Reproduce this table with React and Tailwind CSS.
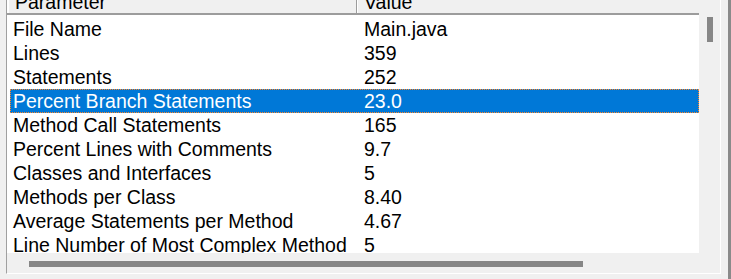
import React from 'react';

const metrics = [
  ['File Name', 'Main.java'],
  ['Lines', '359'],
  ['Statements', '252'],
  ['Percent Branch Statements', '23.0'],
  ['Method Call Statements', '165'],
  ['Percent Lines with Comments', '9.7'],
  ['Classes and Interfaces', '5'],
  ['Methods per Class', '8.40'],
  ['Average Statements per Method', '4.67'],
  ['Line Number of Most Complex Method', '5'],
];

const Row = ({ name, value, selected }) => (
  <div
    className={
      selected
        ? 'ml-[3px] h-[24px] flex shrink-0 bg-[#0078d7] text-white border border-dotted border-[#ff8728] leading-[22px]'
        : 'ml-[3px] h-[24px] flex shrink-0 text-black leading-[24px]'
    }
  >
    <div className={selected ? 'w-[346px] pl-[2px] whitespace-nowrap' : 'w-[347px] pl-[3px] whitespace-nowrap'}>
      {name}
    </div>
    <div className="pl-[7px] whitespace-nowrap">{value}</div>
  </div>
);

export default function App() {
  return (
    <div className="w-[731px] h-[279px] overflow-hidden bg-[#f0f0f0] flex font-['Liberation_Sans',Arial,sans-serif] text-[19.5px]">
      {/* scroll pane */}
      <div className="ml-[6px] mt-[-10px] w-[715px] h-[284px] shrink-0 flex flex-col border-l border-l-[#a0a0a0] border-r border-r-white border-b border-b-white">
        <div className="flex flex-1 min-h-0">
          {/* table */}
          <div className="w-[692px] flex flex-col overflow-hidden">
            <div className="h-[25px] shrink-0 flex bg-[#f0f0f0] border-b-2 border-b-[#9c9c9c] leading-[24px]">
              <div className="w-[350px] pl-[6px] border-l-2 border-l-white border-r border-r-[#9c9c9c]">Parameter</div>
              <div className="flex-1 pl-[6px] border-l border-l-white">Value</div>
            </div>
            <div className="flex-1 bg-white pt-[2px] flex flex-col overflow-hidden">
              {metrics.map(([name, value], i) => (
                <Row key={name} name={name} value={value} selected={i === 3} />
              ))}
            </div>
          </div>
          {/* vertical scrollbar */}
          <div className="w-[21px] flex flex-col">
            <div className="h-[25px] shrink-0" />
            <div className="flex-1 bg-[#f0f0f0] pt-[2px] pl-[8px]">
              <div className="w-[6px] h-[25px] bg-[#868686]" />
            </div>
          </div>
        </div>
        {/* horizontal scrollbar */}
        <div className="h-[20px] shrink-0 flex">
          <div className="w-[692px] pt-[8px] pl-[22px]">
            <div className="w-[554px] h-[6px] bg-[#868686]" />
          </div>
          <div className="flex-1" />
        </div>
      </div>
      <div className="flex-1" />
      <div className="w-[3px] bg-[#8a8a8a]" />
    </div>
  );
}
